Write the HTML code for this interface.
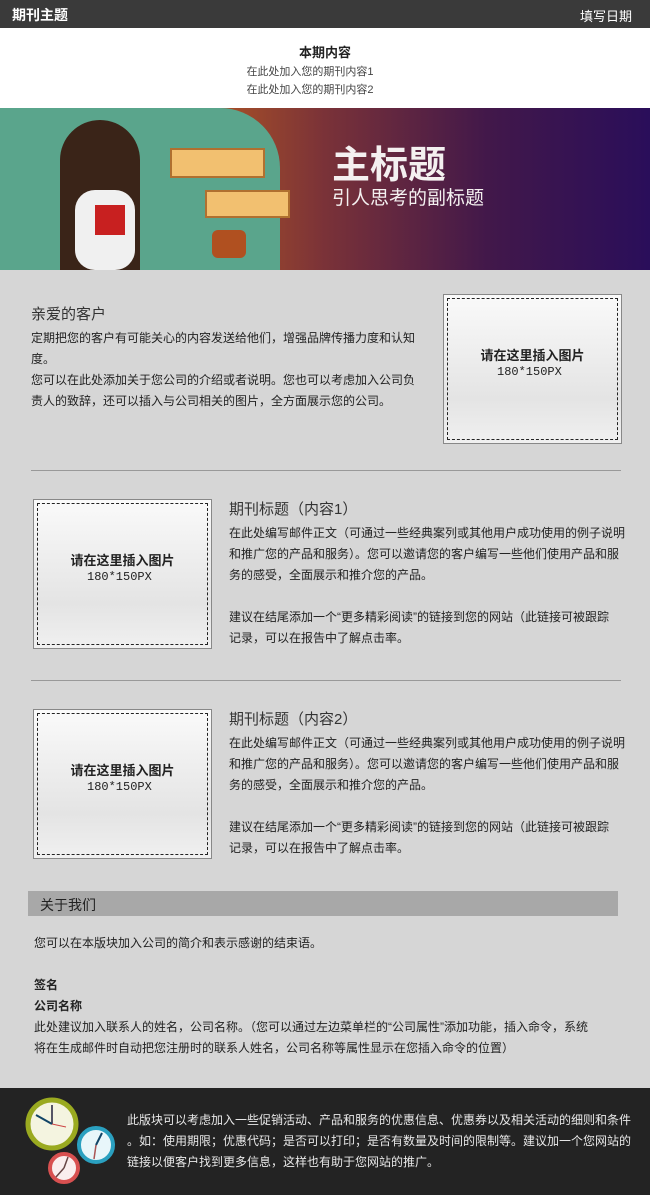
<!DOCTYPE html>
<html><head><meta charset="utf-8"><style>
*{margin:0;padding:0;box-sizing:border-box}
body{width:650px;height:1195px;background:#d6d6d6;font-family:"Liberation Sans","Noto Sans CJK SC",sans-serif;color:#222;position:relative;overflow:hidden}
.a{position:absolute;white-space:nowrap}
.t{font-size:12px;line-height:21px}
.box{position:absolute;width:179px;height:150px;border:1px solid #888;background:linear-gradient(#fafafa,#e4e4e4 70%,#f0f0f0);}
.box:before{content:"";position:absolute;left:3px;top:3px;right:3px;bottom:3px;border:1px dashed #222}
.box b{position:absolute;top:50px;left:0;width:100%;text-align:center;font-size:13px}
.box i{position:absolute;top:70px;left:53px;font-style:normal;font-size:12px;font-family:"Liberation Mono",monospace}
.hr{position:absolute;left:31px;width:590px;height:1px;background:#999}
</style></head><body>
<div class="a" style="left:0;top:0;width:650px;height:28px;background:#3a3a3a"></div>
<div class="a" style="left:12px;top:5px;color:#fff;font-size:14px;font-weight:bold">期刊主题</div>
<div class="a" style="left:580px;top:6px;color:#fff;font-size:13px">填写日期</div>
<div class="a" style="left:0;top:28px;width:650px;height:80px;background:#fff"></div>
<div class="a" style="left:0;top:42px;width:650px;text-align:center;font-size:13px;font-weight:bold">本期内容</div>
<div class="a" style="left:0;top:63px;width:620px;text-align:center;font-size:11px;color:#444;line-height:18px">在此处加入您的期刊内容1<br>在此处加入您的期刊内容2</div>
<div class="a" style="left:0;top:108px;width:650px;height:162px;background:linear-gradient(90deg,#e07a20 0%,#c0601e 25%,#7a3238 50%,#42184a 75%,#2a0e5a 100%)"></div>
<div class="a" style="left:0;top:108px;width:280px;height:162px;background:#5aa58c;border-radius:0 60px 0 0"></div>
<div class="a" style="left:60px;top:120px;width:80px;height:150px;background:#3a2418;border-radius:40px 40px 0 0"></div>
<div class="a" style="left:75px;top:190px;width:60px;height:80px;background:#f0f0f0;border-radius:20px"></div>
<div class="a" style="left:95px;top:205px;width:30px;height:30px;background:#c82020"></div>
<div class="a" style="left:170px;top:148px;width:95px;height:30px;background:#f2c070;border:2px solid #b07030"></div>
<div class="a" style="left:205px;top:190px;width:85px;height:28px;background:#f2c070;border:2px solid #b07030"></div>
<div class="a" style="left:212px;top:230px;width:34px;height:28px;background:#b05020;border-radius:6px"></div>
<div class="a" style="left:332px;top:134px;color:#f4f0f0;font-size:38px;font-weight:bold">主标题</div>
<div class="a" style="left:332px;top:183px;color:#f4f0f0;font-size:19px">引人思考的副标题</div>

<div class="a" style="left:31px;top:303px;font-size:15px;color:#333">亲爱的客户</div>
<div class="a t" style="left:31px;top:328px;color:#222">定期把您的客户有可能关心的内容发送给他们，增强品牌传播力度和认知<br>度。<br>您可以在此处添加关于您公司的介绍或者说明。您也可以考虑加入公司负<br>责人的致辞，还可以插入与公司相关的图片，全方面展示您的公司。</div>
<div class="box" style="left:443px;top:294px"><b>请在这里插入图片</b><i>180*150PX</i></div>
<div class="hr" style="top:470px"></div>

<div class="box" style="left:33px;top:499px"><b>请在这里插入图片</b><i>180*150PX</i></div>
<div class="a" style="left:229px;top:498px;font-size:15px;color:#333">期刊标题（内容1）</div>
<div class="a t" style="left:229px;top:523px">在此处编写邮件正文（可通过一些经典案列或其他用户成功使用的例子说明<br>和推广您的产品和服务）。您可以邀请您的客户编写一些他们使用产品和服<br>务的感受，全面展示和推介您的产品。<br><br>建议在结尾添加一个“更多精彩阅读”的链接到您的网站（此链接可被跟踪<br>记录，可以在报告中了解点击率。</div>
<div class="hr" style="top:680px"></div>

<div class="box" style="left:33px;top:709px"><b>请在这里插入图片</b><i>180*150PX</i></div>
<div class="a" style="left:229px;top:708px;font-size:15px;color:#333">期刊标题（内容2）</div>
<div class="a t" style="left:229px;top:733px">在此处编写邮件正文（可通过一些经典案列或其他用户成功使用的例子说明<br>和推广您的产品和服务）。您可以邀请您的客户编写一些他们使用产品和服<br>务的感受，全面展示和推介您的产品。<br><br>建议在结尾添加一个“更多精彩阅读”的链接到您的网站（此链接可被跟踪<br>记录，可以在报告中了解点击率。</div>

<div class="a" style="left:28px;top:891px;width:590px;height:25px;background:#a8a8a8"></div>
<div class="a" style="left:40px;top:895px;font-size:14px;color:#222">关于我们</div>
<div class="a" style="left:34px;top:934px;font-size:12px">您可以在本版块加入公司的简介和表示感谢的结束语。</div>
<div class="a t" style="left:34px;top:975px;font-weight:bold">签名<br>公司名称</div>
<div class="a t" style="left:34px;top:1017px">此处建议加入联系人的姓名，公司名称。（您可以通过左边菜单栏的“公司属性”添加功能，插入命令，系统<br>将在生成邮件时自动把您注册时的联系人姓名，公司名称等属性显示在您插入命令的位置）</div>

<div class="a" style="left:0;top:1088px;width:650px;height:107px;background:#232323"></div>
<svg class="a" style="left:20px;top:1095px" width="100" height="95">
<circle cx="32" cy="29" r="24" fill="#f4f4e0" stroke="#9aaa20" stroke-width="5"/>
<line x1="32" y1="29" x2="32" y2="10" stroke="#556" stroke-width="2"/><line x1="32" y1="29" x2="16" y2="20" stroke="#146" stroke-width="2"/><line x1="32" y1="29" x2="46" y2="32" stroke="#c44" stroke-width="1"/>
<circle cx="76" cy="50" r="17" fill="#e8f6fa" stroke="#2aa0c0" stroke-width="4"/>
<line x1="76" y1="50" x2="82" y2="38" stroke="#146" stroke-width="2"/><line x1="76" y1="50" x2="74" y2="64" stroke="#a55" stroke-width="1.5"/>
<circle cx="44" cy="73" r="14" fill="#faeeee" stroke="#d85050" stroke-width="4"/>
<line x1="44" y1="73" x2="48" y2="62" stroke="#644" stroke-width="1.5"/><line x1="44" y1="73" x2="36" y2="82" stroke="#644" stroke-width="1.5"/>
</svg>
<div class="a" style="left:127px;top:1110px;font-size:12px;line-height:21px;color:#e8e8e8">此版块可以考虑加入一些促销活动、产品和服务的优惠信息、优惠券以及相关活动的细则和条件<br>。如：使用期限；优惠代码；是否可以打印；是否有数量及时间的限制等。建议加一个您网站的<br>链接以便客户找到更多信息，这样也有助于您网站的推广。</div>
</body></html>
